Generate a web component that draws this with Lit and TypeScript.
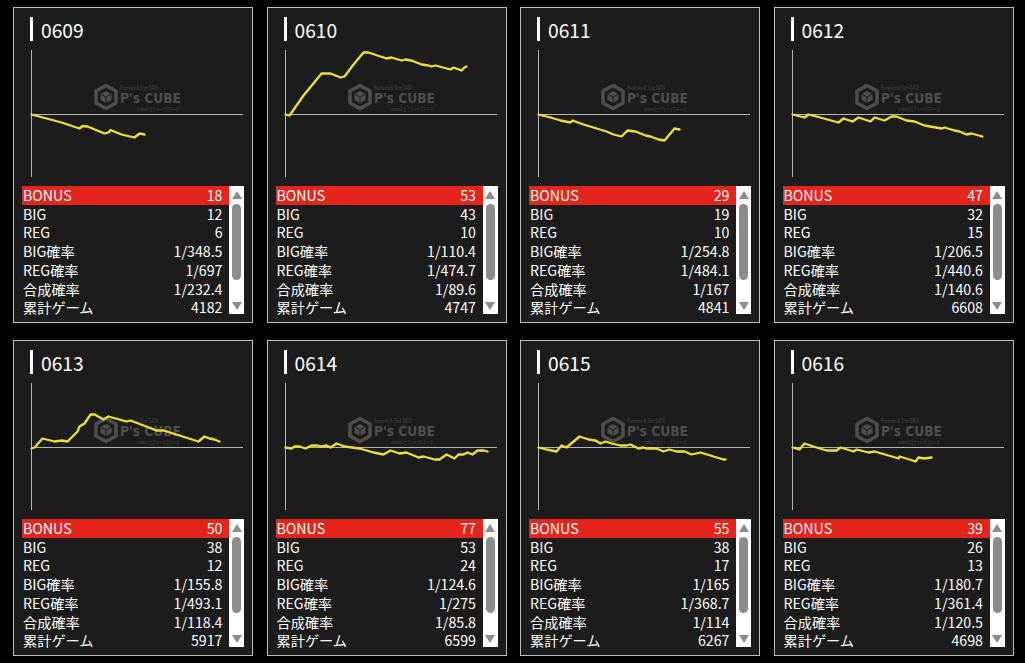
import { LitElement, html, css, svg } from "lit";
import { customElement, property } from "lit/decorators.js";

type Pt = [number, number];
interface Machine { id: string; vals: string[]; pts: Pt[]; }

const LABELS = ["BONUS", "BIG", "REG", "BIG確率", "REG確率", "合成確率", "累計ゲーム"];

const MACHINES: Machine[] = [
  { id: "0609", vals: ["18", "12", "6", "1/348.5", "1/697", "1/232.4", "4182"],
    pts: [[0,0],[30,8],[48,14],[51,11.5],[56,12],[73,19],[77,18],[79,15.5],[90,20],[103,23],[108,19],[113,20]] },
  { id: "0610", vals: ["53", "43", "10", "1/110.4", "1/474.7", "1/89.6", "4747"],
    pts: [[0,0],[4,1],[18,-19],[36,-41],[45,-41],[55,-37],[59,-38],[68,-50],[78,-62],[83,-62],[101,-56],[106,-57],[116,-54],[120,-55],[126,-54],[136,-50],[143,-49],[146,-48],[150,-49],[165,-45],[168,-47],[176,-44],[179,-47],[181,-48]] },
  { id: "0611", vals: ["29", "19", "10", "1/254.8", "1/484.1", "1/167", "4841"],
    pts: [[0,0],[12,3],[22,6],[32,8],[34,6],[45,10],[68,17],[75,20],[83,22],[89,16],[97,17],[107,21],[112,22],[120,25],[126,26],[136,14],[141,15]] },
  { id: "0612", vals: ["47", "32", "15", "1/206.5", "1/440.6", "1/140.6", "6608"],
    pts: [[0,0],[12,3],[16,0],[24,2],[46,8],[51,4],[60,7],[66,3],[78,7],[82,3],[92,6],[99,2],[104,2],[114,6],[122,7],[132,11],[149,14],[152,13],[162,16],[167,17],[174,20],[179,19],[190,22]] },
  { id: "0613", vals: ["50", "38", "12", "1/155.8", "1/493.1", "1/118.4", "5917"],
    pts: [[0,1],[3,0],[11,-9],[23,-6],[30,-7],[36,-6],[46,-16],[48,-21],[53,-24],[59,-33],[63,-33],[72,-28],[77,-31],[95,-26],[99,-27],[125,-17],[132,-17],[167,-6],[173,-11],[178,-9],[183,-8],[188,-6]] },
  { id: "0614", vals: ["77", "53", "24", "1/124.6", "1/275", "1/85.8", "6599"],
    pts: [[0,0],[6,1],[9,-1],[14,-1],[20,1],[26,-2],[32,-2],[36,-1],[41,-2],[45,0],[51,-4],[59,-1],[74,1],[88,5],[98,7],[105,3],[114,6],[121,5],[133,10],[138,9],[149,12],[154,12],[161,7],[169,11],[173,7],[178,7],[182,5],[187,7],[192,3],[198,3],[202,4]] },
  { id: "0615", vals: ["55", "38", "17", "1/165", "1/368.7", "1/114", "6267"],
    pts: [[0,0],[8,2],[18,4],[23,-2],[28,0],[41,-11],[50,-8],[57,-7],[62,-4],[67,-6],[73,-4],[82,-2],[88,-2],[92,-3],[100,1],[105,0],[108,1],[118,1],[125,4],[131,2],[138,4],[146,4],[153,7],[162,5],[185,12],[187,12]] },
  { id: "0616", vals: ["39", "26", "13", "1/180.7", "1/361.4", "1/120.5", "4698"],
    pts: [[0,0],[7,2],[12,-4],[21,-1],[34,3],[44,3],[48,0],[61,4],[64,2],[76,5],[82,4],[89,6],[96,8],[106,11],[107,9],[117,12],[123,14],[126,10],[132,11],[139,10]] },
];

const OX = 9.5;
const OY = 64.5;

@customElement("slot-card")
class SlotCard extends LitElement {
  @property({ type: Object }) machine!: Machine;

  static styles = css`
    :host { display: block; }
    .card {
      box-sizing: border-box;
      height: 316px;
      border: 1px solid #bdbdbd;
      background: #1c1c1c;
      padding: 9px 8px 8px;
      display: flex;
      flex-direction: column;
      gap: 9px;
    }
    .title {
      height: 24px;
      margin-left: 8px;
      padding-left: 8px;
      border-left: 3px solid #fff;
      color: #fff;
      font-size: 19.2px;
      line-height: 26px;
    }
    .chart { display: block; width: 222px; height: 127px; }
    .axis { stroke: #b4b4b4; stroke-width: 1; fill: none; }
    .line { stroke: #efdf30; stroke-width: 2.3; fill: none; stroke-linejoin: round; stroke-linecap: round; }
    .mark { fill: #4e4e4e; font-family: "DejaVu Sans", sans-serif; }
    .mark-big { font-size: 14px; font-weight: 700; }
    .mark-small { fill: #464646; font-family: "Noto Sans CJK JP", sans-serif; }
    .mark-top { font-size: 5.5px; }
    .mark-bottom { font-size: 5px; }
    .hex { fill: none; stroke: #4e4e4e; stroke-width: 3.5; stroke-linejoin: round; }
    .cube { fill: #4e4e4e; }
    .cube-line { fill: none; stroke: #1c1c1c; stroke-width: 1; }
    .panel { display: flex; height: 128px; }
    .rows {
      flex: 1;
      display: grid;
      grid-auto-rows: 18.72px;
      color: #fff;
      font-size: 14.2px;
    }
    .row {
      display: flex;
      justify-content: space-between;
      align-items: center;
      padding: 0 6.5px 0 1px;
      line-height: 18.72px;
      white-space: nowrap;
    }
    .row.head { background: #e5241b; }
    .bar {
      width: 15px;
      background: #fff;
      display: flex;
      flex-direction: column;
      align-items: center;
    }
    .arrow { display: block; width: 10px; height: 8px; margin-top: 5px; fill: #8c8c8c; }
    .arrow.down { margin-top: 0; margin-bottom: 4px; }
    .thumb { width: 9px; height: 76px; margin-top: 5px; margin-bottom: auto; border-radius: 4.5px; background: #8c8c8c; }
  `;

  render() {
    const m = this.machine;
    const points = m.pts.map(([x, y]) => `${OX + x},${OY + y}`).join(" ");
    return html`
      <div class="card">
        <div class="title">${m.id}</div>
        <svg class="chart" viewBox="0 0 222 127">
          ${svg`
            <path class="hex" d="M84 35.5 L94 41 V53 L84 58.5 L74 53 V41 Z"/>
            <path class="cube" d="M84 41 L89.5 44 V50 L84 53 L78.5 50 V44 Z"/>
            <path class="cube-line" d="M78.5 44 L84 47 L89.5 44 M84 47 V53"/>
            <text class="mark mark-small mark-top" x="98" y="39.5" textLength="38" lengthAdjust="spacingAndGlyphs">Pachislo &amp; Slot DATA</text>
            <text class="mark mark-big" x="98" y="53" textLength="61" lengthAdjust="spacingAndGlyphs">P's CUBE</text>
            <text class="mark mark-small mark-bottom" x="115" y="60.5" textLength="42" lengthAdjust="spacingAndGlyphs">unbox2 エアトークスデータ</text>
            <path class="axis" d="M${OX} 0 V127 M${OX} ${OY} H221"/>
            <polyline class="line" points=${points}/>
          `}
        </svg>
        <div class="panel">
          <div class="rows">
            ${LABELS.map((label, i) => html`
              <div class="row ${i === 0 ? "head" : ""}"><span>${label}</span><span>${m.vals[i]}</span></div>
            `)}
          </div>
          <div class="bar">
            <svg class="arrow" viewBox="0 0 10 8"><path d="M5 0 L10 8 H0 Z"/></svg>
            <div class="thumb"></div>
            <svg class="arrow down" viewBox="0 0 10 8"><path d="M0 0 H10 L5 8 Z"/></svg>
          </div>
        </div>
      </div>
    `;
  }
}

@customElement("app-root")
class AppRoot extends LitElement {
  static styles = css`
    :host {
      display: block;
      min-height: 663px;
      background: #000;
      font-family: "Noto Sans CJK JP", "Noto Sans", sans-serif;
    }
    .grid {
      display: grid;
      grid-template-columns: repeat(4, 240px);
      column-gap: 13.5px;
      row-gap: 17px;
      padding: 7px 0 0 13px;
    }
  `;

  render() {
    return html`
      <div class="grid">
        ${MACHINES.map((m) => html`<slot-card .machine=${m}></slot-card>`)}
      </div>
    `;
  }
}
